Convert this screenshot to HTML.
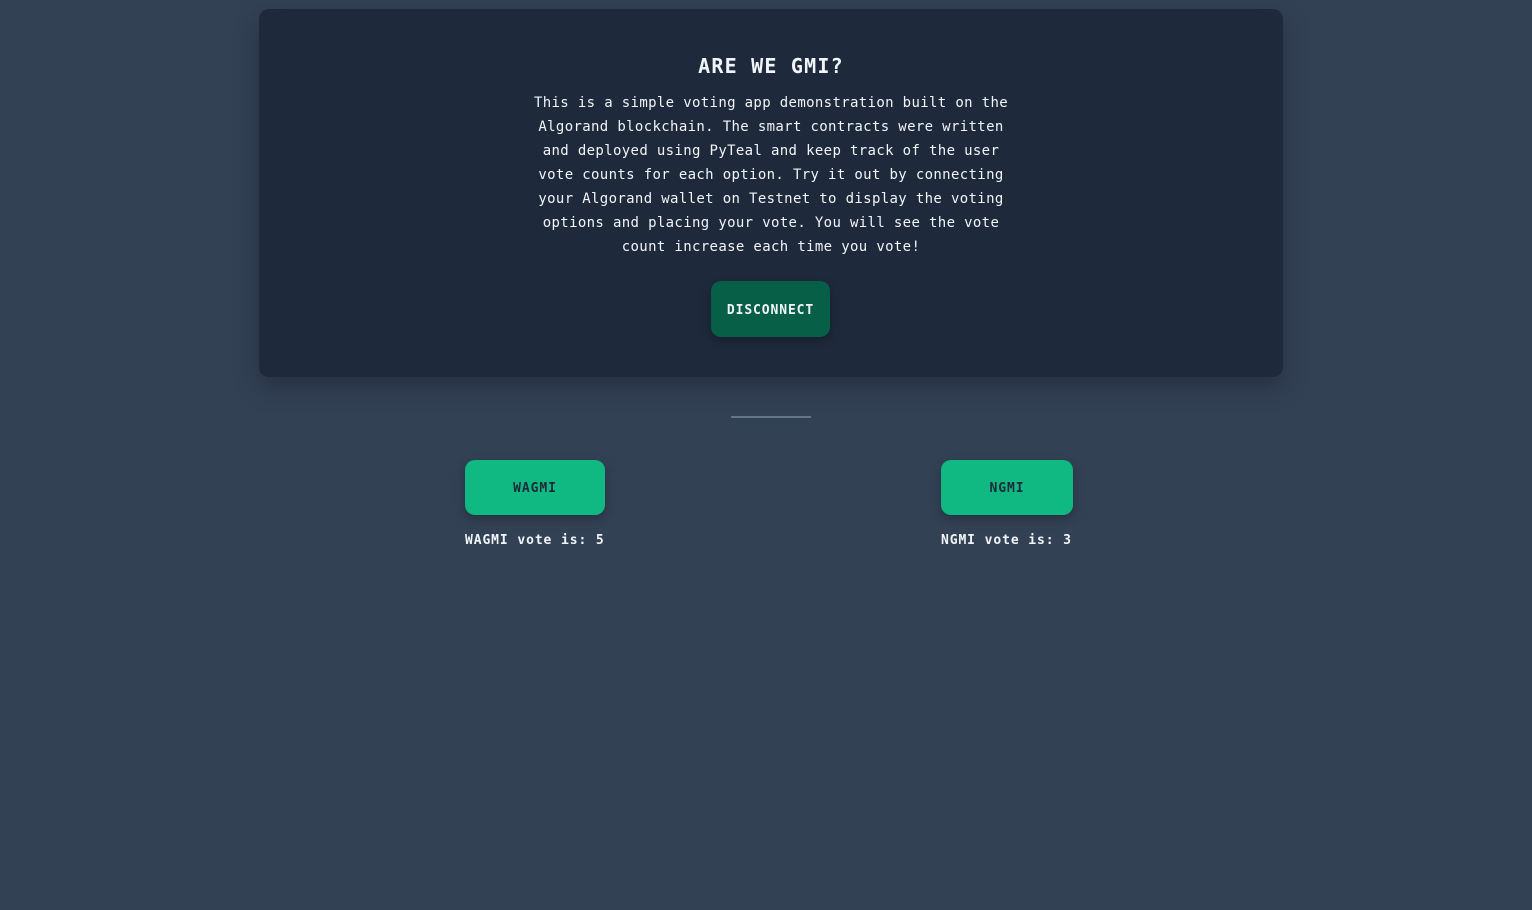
<!DOCTYPE html>
<html><head><meta charset="utf-8"><style>
html,body{margin:0;padding:0;}
body{width:1532px;height:910px;background:#334155;font-family:"DejaVu Sans Mono","Liberation Mono",monospace;color:#f1f5f9;position:relative;overflow:hidden;}
.card{position:absolute;left:259px;top:9px;width:1024px;height:368px;background:#1e293b;border-radius:10px;box-shadow:0 10px 25px rgba(0,0,0,0.25);}
h1{position:absolute;left:0;right:0;top:44px;margin:0;text-align:center;font-size:20px;font-weight:bold;letter-spacing:1.2px;line-height:26px;}
p{position:absolute;left:0;right:0;top:82px;margin:0;text-align:center;font-size:14px;letter-spacing:0.35px;line-height:24px;}
.btn{position:absolute;border-radius:10px;font-weight:bold;font-size:13px;letter-spacing:0.9px;display:flex;align-items:center;justify-content:center;box-shadow:0 4px 10px rgba(0,0,0,0.25);}
.dis{left:452px;top:272px;width:119px;height:56px;background:#065f46;color:#f1f5f9;padding-top:2px;box-sizing:border-box;}
.v{background:#10b981;color:#1e293b;top:460px;height:55px;padding-top:2px;box-sizing:border-box;}
.lbl{position:absolute;top:532px;font-weight:bold;font-size:13px;letter-spacing:0.9px;line-height:18px;white-space:nowrap;}
.div{position:absolute;left:731px;top:416px;width:80px;height:2px;background:#64748b;}
</style></head><body>
<div class="card">
<h1>ARE WE GMI?</h1>
<p>This is a simple voting app demonstration built on the<br>Algorand blockchain. The smart contracts were written<br>and deployed using PyTeal and keep track of the user<br>vote counts for each option. Try it out by connecting<br>your Algorand wallet on Testnet to display the voting<br>options and placing your vote. You will see the vote<br>count increase each time you vote!</p>
<div class="btn dis">DISCONNECT</div>
</div>
<div class="div"></div>
<div class="btn v" style="left:465px;width:140px;">WAGMI</div>
<div class="btn v" style="left:941px;width:132px;">NGMI</div>
<div class="lbl" style="left:465px;">WAGMI vote is: 5</div>
<div class="lbl" style="left:941px;">NGMI vote is: 3</div>
</body></html>
